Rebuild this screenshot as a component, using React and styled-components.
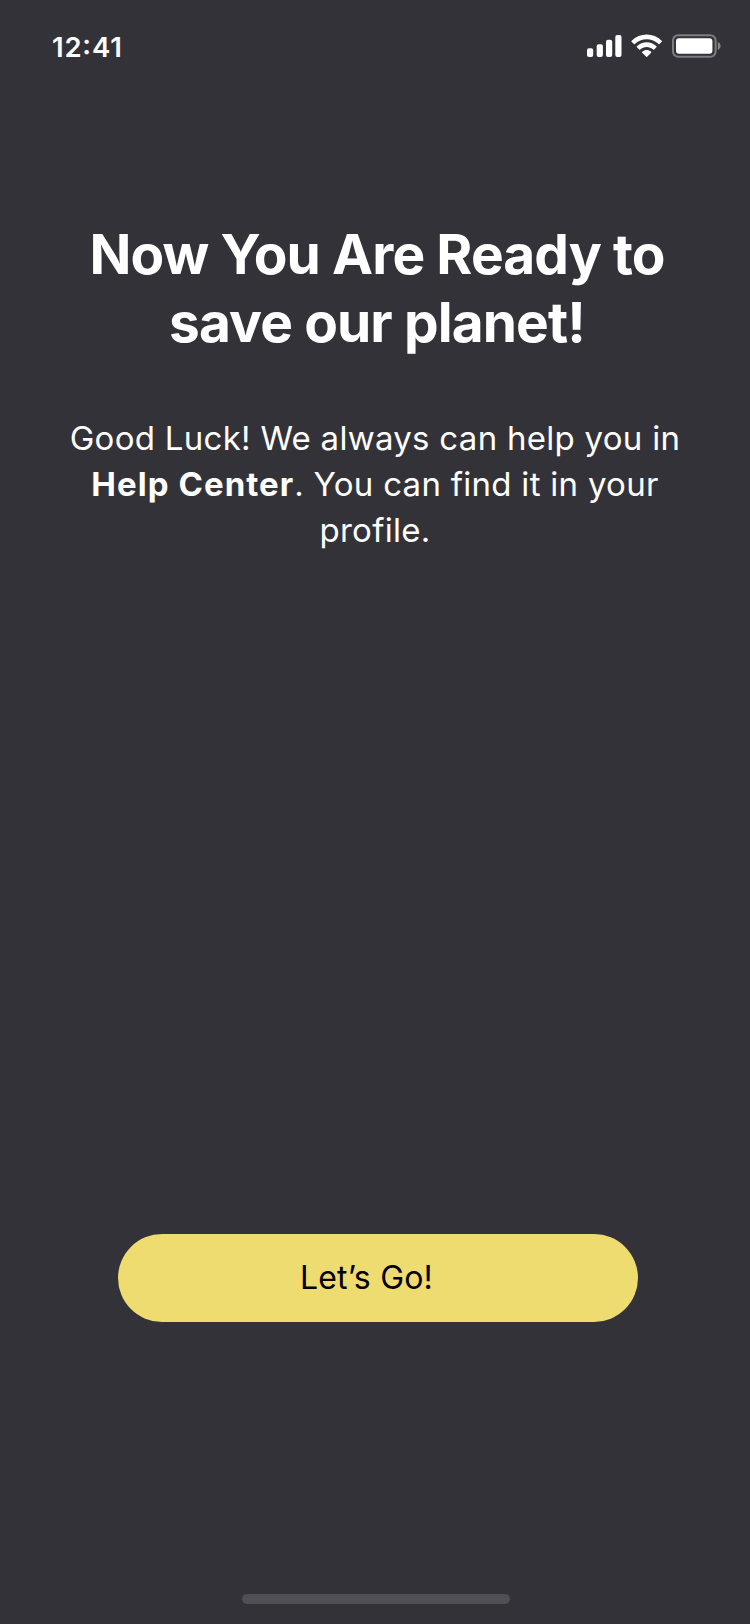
import React from 'react';
import styled, { createGlobalStyle } from 'styled-components';

const Global = createGlobalStyle`
  body { margin: 0; background: #343239; }
`;
const Screen = styled.main`
  box-sizing: border-box;
  width: 750px;
  height: 1624px;
  display: flex;
  flex-direction: column;
  background: #343239;
  color: #fff;
  font-family: Inter, "Liberation Sans", sans-serif;
`;
const StatusBar = styled.header`
  height: 94px;
  box-sizing: border-box;
  padding: 32px 28px 0 52px;
  display: flex;
  justify-content: space-between;
  align-items: flex-start;
`;
const Time = styled.time`
  font-size: 27.5px;
  line-height: 30px;
  font-weight: 600;
  letter-spacing: 0.8px;
  font-feature-settings: "case" 1;
`;
const StatusIcons = styled.svg`
  display: block;
  width: 136px;
  height: 26px;
  margin-top: 1px;
`;
const Title = styled.h1`
  margin: 126px 0 0 4px;
  text-align: center;
  font-size: 55px;
  line-height: 68px;
  font-weight: 700;
  letter-spacing: -0.9px;
`;
const Message = styled.p`
  margin: 59px 0 0;
  text-align: center;
  font-size: 33px;
  line-height: 46px;
  letter-spacing: 0.28px;
`;
const Strong = styled.strong`
  font-weight: 700;
  letter-spacing: 1.05px;
`;
const Button = styled.button`
  margin: auto 112px 272px 118px;
  height: 88px;
  border: 0;
  border-radius: 44px;
  padding: 0 23px 0 0;
  background: #eedc71;
  color: #000;
  font: 400 32px/40px Inter, sans-serif;
  letter-spacing: 0.2px;
`;
const HomeIndicator = styled.div`
  flex: none;
  width: 268px;
  height: 10px;
  margin: 0 0 20px 242px;
  border-radius: 5px;
  background: #514f54;
`;

export default function App() {
  return (
    <Screen>
      <Global />
      <StatusBar>
        <Time>12:41</Time>
        <StatusIcons viewBox="586 33 136 26" fill="#fff" aria-hidden="true">
          <rect x="587" y="48.3" width="6.2" height="8.7" rx="2" />
          <rect x="596.7" y="44.3" width="6.2" height="12.7" rx="2" />
          <rect x="606" y="39.8" width="6.2" height="17.2" rx="2" />
          <rect x="615.3" y="35" width="6.2" height="22" rx="2" />
          <g transform="translate(631.4 33.5) scale(2 2.05)">
            <path d="M7.637 2.773C9.852 2.773 11.983 3.625 13.589 5.152C13.71 5.269 13.903 5.268 14.022 5.148L15.178 3.982C15.239 3.921 15.272 3.839 15.272 3.753C15.271 3.668 15.237 3.586 15.176 3.526C10.961-.49 4.312-.49.097 3.526C.036 3.586.001 3.668 0 3.753C0 3.839.033 3.921.094 3.982L1.25 5.148C1.369 5.268 1.562 5.27 1.683 5.152C3.289 3.624 5.42 2.773 7.637 2.773Z" />
            <path d="M7.637 6.569C8.854 6.568 10.028 7.021 10.93 7.838C11.053 7.954 11.245 7.952 11.364 7.833L12.518 6.666C12.579 6.605 12.613 6.522 12.612 6.435C12.611 6.349 12.575 6.267 12.513 6.207C9.766 3.65 5.51 3.65 2.763 6.207C2.7 6.267 2.665 6.349 2.664 6.435C2.663 6.522 2.697 6.605 2.758 6.666L3.912 7.833C4.031 7.952 4.223 7.954 4.345 7.838C5.247 7.022 6.42 6.569 7.637 6.569Z" />
            <path d="M9.95 9.122C9.952 9.209 9.918 9.292 9.856 9.353L7.859 11.369C7.801 11.428 7.721 11.461 7.637 11.461C7.554 11.461 7.474 11.428 7.416 11.369L5.418 9.353C5.357 9.292 5.323 9.209 5.325 9.122C5.327 9.036 5.364 8.954 5.428 8.896C6.703 7.818 8.571 7.818 9.847 8.896C9.911 8.954 9.948 9.036 9.95 9.122Z" />
          </g>
          <rect x="673" y="35.2" width="42.6" height="21.6" rx="5.2" fill="none" stroke="#7d7c80" strokeWidth="2" />
          <rect x="676" y="38.2" width="36.4" height="15.6" rx="3" />
          <path d="M717.8 42v8c1.8-.7 2.8-2.3 2.8-4s-1-3.300-2.8-4Z" fill="#858488" />
        </StatusIcons>
      </StatusBar>
      <Title>Now You Are Ready to<br />save our planet!</Title>
      <Message>
        Good Luck! We always can help you in<br />
        <Strong>Help Center</Strong>. You can find it in your<br />
        profile.
      </Message>
      <Button>Let’s Go!</Button>
      <HomeIndicator />
    </Screen>
  );
}
